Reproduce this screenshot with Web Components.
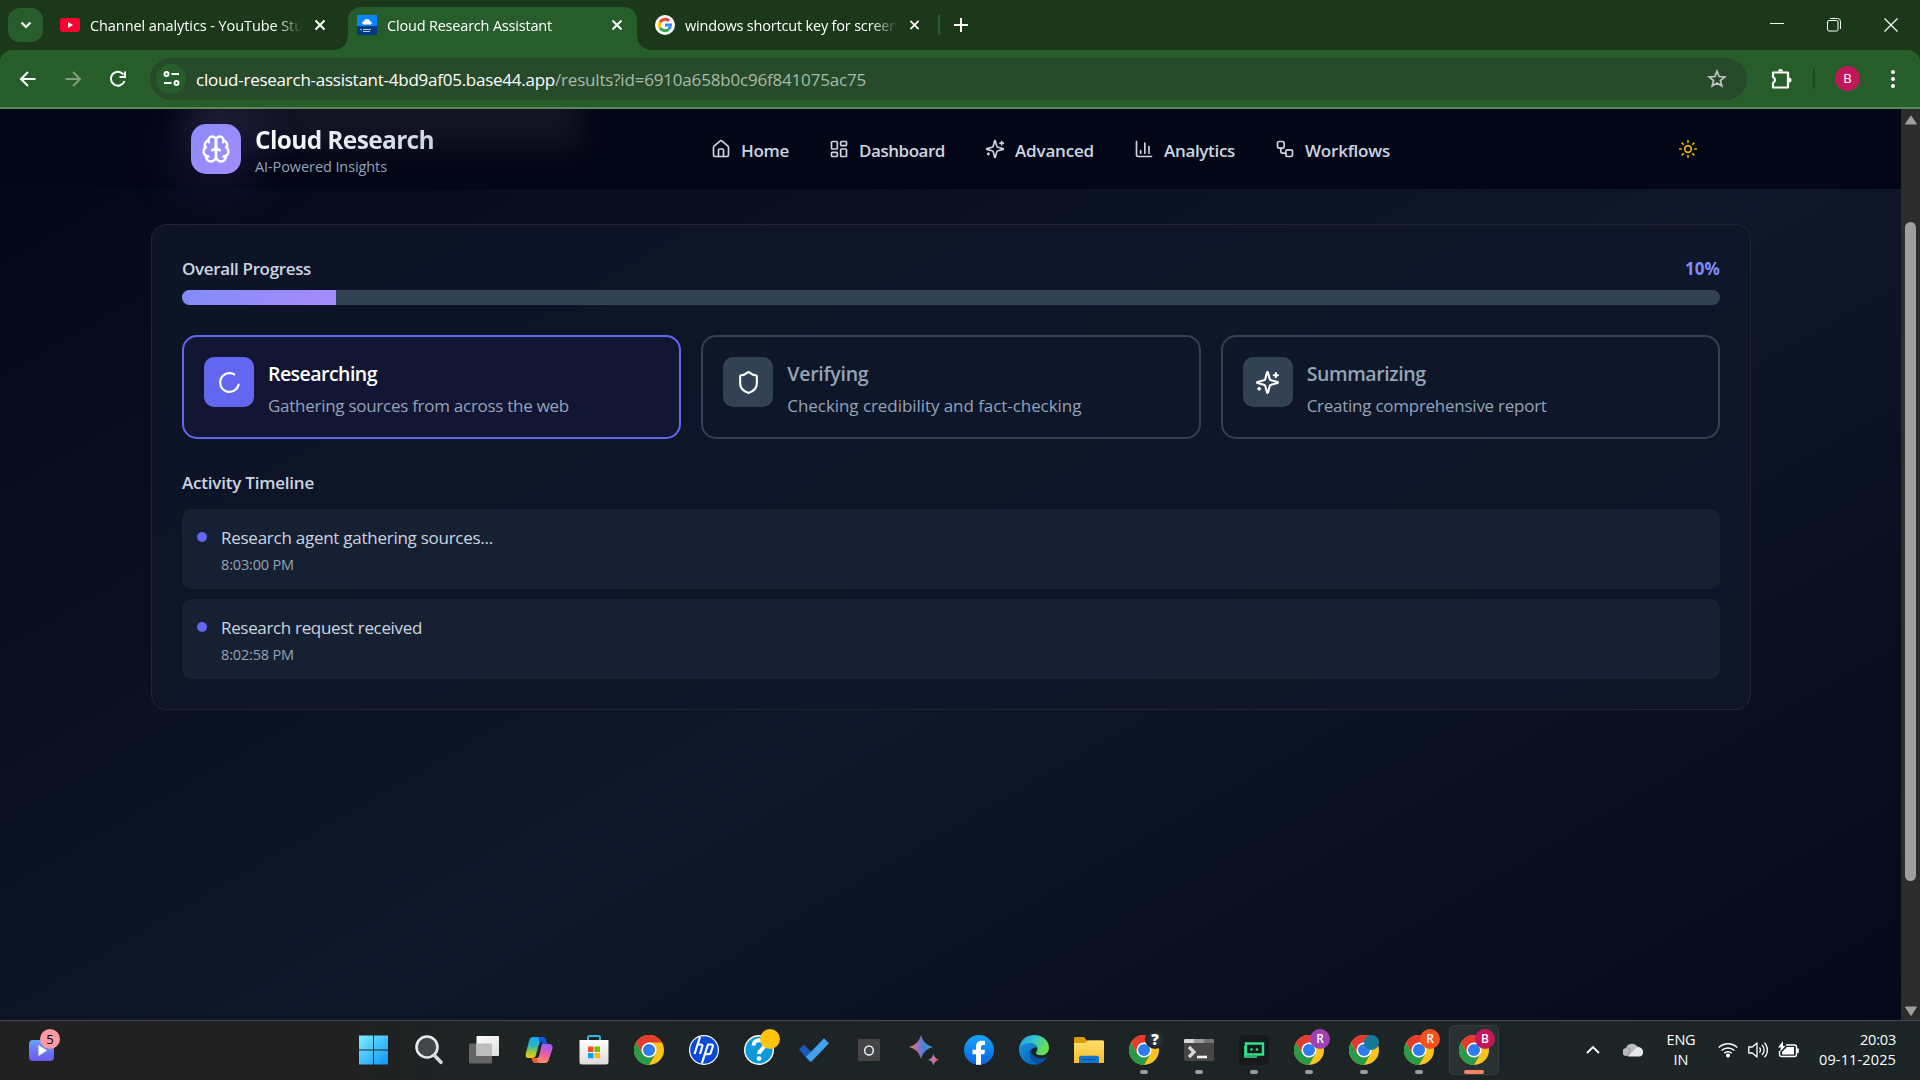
<!DOCTYPE html>
<html lang="en">
<head>
<meta charset="utf-8">
<title>Cloud Research Assistant</title>
<style>
	html, body {
		margin: 0;
		width: 1920px;
		height: 1080px;
		overflow: hidden;
		background: #020617;
		font-family: "Open Sans", "Noto Sans", sans-serif;
	}

	body {
		display: flex;
		flex-direction: column;
	}
</style>
</head>
<body>

<browser-tabs></browser-tabs>
<browser-toolbar></browser-toolbar>
<browser-viewport>
	<site-header slot="header">
		<nav-link icon="home" w="48">Home</nav-link>
		<nav-link icon="dashboard" w="86">Dashboard</nav-link>
		<nav-link icon="sparkles" w="79">Advanced</nav-link>
		<nav-link icon="chart" w="71">Analytics</nav-link>
		<nav-link icon="workflow" w="85">Workflows</nav-link>
	</site-header>
	<progress-card value="10">
		<stage-card slot="stages" icon="loader" active>
			<fit-text slot="title" w="109">Researching</fit-text>
			<fit-text slot="text" w="301">Gathering sources from across the web</fit-text>
		</stage-card>
		<stage-card slot="stages" icon="shield">
			<fit-text slot="title" w="81">Verifying</fit-text>
			<fit-text slot="text" w="294">Checking credibility and fact-checking</fit-text>
		</stage-card>
		<stage-card slot="stages" icon="sparkles">
			<fit-text slot="title" w="119">Summarizing</fit-text>
			<fit-text slot="text" w="240">Creating comprehensive report</fit-text>
		</stage-card>
		<timeline-item slot="activity">
			<fit-text w="272">Research agent gathering sources...</fit-text>
			<fit-text slot="time" w="73">8:03:00 PM</fit-text>
		</timeline-item>
		<timeline-item slot="activity">
			<fit-text w="201">Research request received</fit-text>
			<fit-text slot="time" w="73">8:02:58 PM</fit-text>
		</timeline-item>
	</progress-card>
</browser-viewport>
<task-bar></task-bar>

<script>
const LINE_ICONS = {
	home: '<path d="M15 21v-8a1 1 0 0 0-1-1h-4a1 1 0 0 0-1 1v8"/><path d="M3 10a2 2 0 0 1 .709-1.528l7-5.999a2 2 0 0 1 2.582 0l7 5.999A2 2 0 0 1 21 10v9a2 2 0 0 1-2 2H5a2 2 0 0 1-2-2z"/>',
	dashboard: '<rect x="3" y="3" width="7" height="9" rx="1"/><rect x="14" y="3" width="7" height="5" rx="1"/><rect x="14" y="12" width="7" height="9" rx="1"/><rect x="3" y="16" width="7" height="5" rx="1"/>',
	sparkles: '<path d="M9.937 15.5A2 2 0 0 0 8.5 14.063l-6.135-1.582a.5.5 0 0 1 0-.962L8.5 9.936A2 2 0 0 0 9.937 8.5l1.582-6.135a.5.5 0 0 1 .963 0L14.063 8.5A2 2 0 0 0 15.5 9.937l6.135 1.581a.5.5 0 0 1 0 .964L15.5 14.063a2 2 0 0 0-1.437 1.437l-1.582 6.135a.5.5 0 0 1-.963 0z"/><path d="M20 3v4M22 5h-4M4 17v2M5 18H3"/>',
	chart: '<path d="M3 3v16a2 2 0 0 0 2 2h16M18 17V9M13 17V5M8 17v-3"/>',
	workflow: '<rect x="3" y="3" width="8" height="8" rx="2"/><path d="M7 11v4a2 2 0 0 0 2 2h4"/><rect x="13" y="13" width="8" height="8" rx="2"/>',
	sun: '<circle cx="12" cy="12" r="4"/><path d="M12 2v2M12 20v2M4.93 4.93l1.41 1.41M17.66 17.66l1.41 1.41M2 12h2M20 12h2M6.34 17.66l-1.41 1.41M19.07 4.93l-1.41 1.41"/>',
	brain: '<path d="M12 5a3 3 0 1 0-5.997.125 4 4 0 0 0-2.526 5.77 4 4 0 0 0 .556 6.588A4 4 0 1 0 12 18Z"/><path d="M12 5a3 3 0 1 1 5.997.125 4 4 0 0 1 2.526 5.77 4 4 0 0 1-.556 6.588A4 4 0 1 1 12 18Z"/><path d="M15 13a4.5 4.5 0 0 1-3-4 4.5 4.5 0 0 1-3 4"/><path d="M17.599 6.5a3 3 0 0 0 .399-1.375M6.003 5.125A3 3 0 0 0 6.401 6.5M3.477 10.896a4 4 0 0 1 .585-.396M19.938 10.5a4 4 0 0 1 .585.396M6 18a4 4 0 0 1-1.967-.516M19.967 17.484A4 4 0 0 1 18 18"/>',
	shield: '<path d="M20 13c0 5-3.5 7.5-7.66 8.95a1 1 0 0 1-.67-.01C7.5 20.5 4 18 4 13V6a1 1 0 0 1 1-1c2 0 4.5-1.2 6.24-2.72a1.17 1.17 0 0 1 1.52 0C14.51 3.81 17 5 19 5a1 1 0 0 1 1 1z"/>',
	loader: '<path d="M21 12a9 9 0 1 1-6.219-8.56" transform="rotate(12 12 12)"/>'
};

const CHROME = `
	<circle cx="15" cy="15" r="15" fill="#fcc31e"/>
	<path d="M2 7.500A15 15 0 0 0 15 30l6.500-11.200L8.500 18.700z" fill="#2a9a48"/>
	<path d="M2 7.500A15 15 0 0 1 28 7.500H15L8.500 18.700z" fill="#e33b2e"/>
	<circle cx="15" cy="15" r="7.500" fill="#fff"/>
	<circle cx="15" cy="15" r="6" fill="#2f7bf0"/>`;

// every drawing sits in a 30 x 30 box
const APP_ICONS = {
	start: '<defs><linearGradient id="a" gradientUnits="userSpaceOnUse" x2="30" y2="30"><stop stop-color="#7cf0ff"/><stop offset="1" stop-color="#0d90f5"/></linearGradient></defs><path d="M0 .500h14v14H0zM15 .500h14v14H15zM0 15.500h14v14H0zM15 15.500h14v14H15z" fill="url(#a)"/>',
	search: '<circle cx="13" cy="12" r="10.500" fill="#43474a" stroke="#e9e9eb" stroke-width="2.600"/><path d="M20.500 20.500l6.500 6.800" stroke="#d9dade" stroke-width="3.600" stroke-linecap="round"/>',
	tasks: '<defs><linearGradient id="a" x2="1" y2="1"><stop stop-color="#fff"/><stop offset="1" stop-color="#ddd"/></linearGradient></defs><rect x="0" y="8.500" width="23" height="20" rx="1" fill="#656565"/><rect x="7.500" y="1" width="22.500" height="20" rx="1" fill="url(#a)"/><path d="M7.500 8.500H23V21H7.500z" fill="#bdbdbd"/>',
	copilot: `<defs>
		<linearGradient id="a" x2="0" y2="1"><stop stop-color="#1aa6f0"/><stop offset=".4" stop-color="#23b8c0"/><stop offset=".7" stop-color="#9bc93c"/><stop offset="1" stop-color="#f6c712"/></linearGradient>
		<linearGradient id="b" x1=".6" x2=".3" y2="1"><stop stop-color="#9a5cf5"/><stop offset=".5" stop-color="#e860a8"/><stop offset="1" stop-color="#ff9a4a"/></linearGradient></defs>
		<path d="M9 2h9c2.500 0 3.500 1.500 4 4l.8 3H17c-2 0-2.500 1-3 3l-2 7.500c-.5 2-2 3.500-4 3.500H4.500C2 23 1.300 21 1.800 18.500L5 6c.6-2.500 2-4 4-4z" fill="url(#a)"/>
		<path d="M14 2h4c2.500 0 3.500 1.500 4 4l1 3h-5c-1 0-2 .5-2.500 1.500C15 8 15.500 4 14 2z" fill="#1454d8"/>
		<path d="M21 28H12c-2.500 0-3.500-1.500-4-4l-.4-1H9c2 0 3-1.500 3.500-3.500l2-7.500c.5-2 2-3 4-3H25c2.500 0 4 2 3.500 4.500L25 24c-.6 2.500-2 4-4 4z" fill="url(#b)"/>
		<path d="M12.500 19.500l3.300-11c.5-1.300 1.500-2 2.700-2l-3.300 14c-.4 1.700-1.200 2.500-2.500 2.500h-2c.9-.7 1.400-2 1.800-3.500z" fill="#1e2324"/>
		<path d="M15.500 28H12c-2.500 0-3.500-1.500-4-4l-.4-1h4.900c.8 2 1 4 3 5z" fill="#ef5a35"/>`,
	store: '<defs><linearGradient id="a" x2="0" y2="1"><stop stop-color="#fff"/><stop offset="1" stop-color="#dcdcdc"/></linearGradient></defs><path d="M9 6V2.500c0-1 .5-1.500 1.500-1.500h9c1 0 1.500.5 1.500 1.500V6" fill="none" stroke="#2fb4ea" stroke-width="2"/><path d="M.5 5h29v22a2.500 2.500 0 0 1-2.500 2.500H3A2.500 2.500 0 0 1 .5 27z" fill="url(#a)"/><path d="M9 11.500h5.500V17H9z" fill="#f25022"/><path d="M15.500 11.500H21V17h-5.500z" fill="#7fba00"/><path d="M9 18h5.500v5.200H9z" fill="#00a4ef"/><path d="M15.500 18H21v5.200h-5.500z" fill="#ffb900"/>',
	chrome: CHROME,
	hp: '<circle cx="15" cy="15" r="15" fill="#fff"/><circle cx="15" cy="15" r="13.800" fill="#0748d6"/><path d="M11 2L5.500 19M8.500 9.500h3.200c1.500 0 2 .8 1.600 2L11 19M19 9.500L12.800 28.500M18 9.500h4.200c1.500 0 2 .8 1.600 2l-2 6.200c-.3 1-1 1.500-2 1.500H15.500" fill="none" stroke="#fff" stroke-width="2.200"/>',
	help: '<circle cx="15" cy="15" r="15" fill="#fff"/><circle cx="15" cy="15" r="13.600" fill="#0d9ada"/><path d="M9.500 10.500c0-7 11-7 11-.5 0 4-5.500 4.500-5.500 9" fill="none" stroke="#fff" stroke-width="4"/><circle cx="15" cy="23.500" r="2.300" fill="#fff"/>',
	todo: '<path d="M0 14.500L4.800 9.500l10 10L11 27z" fill="#185abd"/><path d="M7 22L25 3.200l5 5.100L12 27z" fill="#41a2ee"/>',
	letter: '<rect x="4" y="4" width="22" height="22" rx="1" fill="#454545"/><ellipse cx="15" cy="15.500" rx="4.300" ry="4.600" fill="none" stroke="#e8f2fb" stroke-width="1.500"/>',
	spark: '<defs><linearGradient id="a" x2="1"><stop stop-color="#f08a4a"/><stop offset=".35" stop-color="#a070b8"/><stop offset=".65" stop-color="#3d86d8"/><stop offset="1" stop-color="#35b0d0"/></linearGradient><linearGradient id="b" x2="1"><stop stop-color="#9a78e0"/><stop offset="1" stop-color="#f06a6a"/></linearGradient></defs><path d="M12 0c2.200 7 5 9.800 12 12-7 2.200-9.800 5-12 12C9.800 17 7 14.200 0 12 7 9.800 9.800 7 12 0z" fill="url(#a)"/><path d="M24.500 19c.9 3.200 2.300 4.800 5.500 5.700-3.200.9-4.600 2.500-5.500 5.700-.9-3.200-2.300-4.800-5.500-5.700 3.200-.9 4.600-2.500 5.500-5.700z" fill="url(#b)"/>',
	facebook: '<defs><linearGradient id="a" x2="0" y2="1"><stop stop-color="#18a5f8"/><stop offset="1" stop-color="#0a63e0"/></linearGradient></defs><circle cx="15" cy="15" r="15" fill="url(#a)"/><path d="M12 29.700V19.300H8.500v-4.500H12v-3c0-4 2.300-6 5.800-6 1.200 0 2.700.2 3.200.3v3.900h-2c-1.600 0-2 .9-2 2v2.800h4l-.7 4.500H17v10.400z" fill="#fff"/>',
	edge: `<defs><linearGradient id="a" x2="1" y2=".4"><stop stop-color="#1c9be0"/><stop offset=".5" stop-color="#30c4d0"/><stop offset="1" stop-color="#6be04e"/></linearGradient>
		<linearGradient id="b" x2=".6" y2="1"><stop stop-color="#1695dc"/><stop offset="1" stop-color="#0866c0"/></linearGradient></defs>
		<path d="M0 14C1 5 7 0 15 0c9 0 15 6 15 12.500 0 5-3.500 7.800-8 7.800-3.500 0-5-1.200-5-2.300s1.500-1.500 1.500-4c0-3-3-5.500-7-5.500C6.500 8.500 2 11 0 14z" fill="url(#a)"/>
		<path d="M0 14c2-4 6-6 10.500-6 4 0 7.500 2 8 5-4-1.500-7.500 1.500-7.500 6 0 6 6 9.500 9 10C10 32-.5 25 0 14z" fill="url(#b)"/>
		<path d="M12.500 13.500C8 17 11 27 20 29c3-1 6-3.500 7.500-6 .3-.6-.2-.8-.8-.5-6 2.500-16-1-14.200-9z" fill="#0c4f9e"/>`,
	folder: '<defs><linearGradient id="a" x2="0" y2="1"><stop stop-color="#ffdf70"/><stop offset="1" stop-color="#fbbd28"/></linearGradient></defs><path d="M0 3.500C0 2.500.5 2 1.500 2H10l3 3.500h15c1.200 0 2 .5 2 1.500V12H0z" fill="#dd9a08"/><path d="M0 8h11l3-2.500h14.500c1 0 1.500.5 1.500 1.500v21H0z" fill="url(#a)"/><path d="M5 28v-5c0-1.500.8-2.300 2.300-2.300h15.400c1.500 0 2.300.8 2.300 2.300v5z" fill="#0f78cc"/><path d="M8.500 24.500h13" stroke="#0b4f94" stroke-width="1.200"/>',
	terminal: '<rect y="4" width="30" height="22" rx="1.500" fill="#464646"/><path d="M0 8V5.500C0 4.500.5 4 1.500 4H10v4z" fill="#d8d8d8"/><path d="M10 4h10v4H10z" fill="#9c9c9c"/><path d="M20 4h8.500c1 0 1.500.5 1.500 1.500V8H20z" fill="#747474"/><path d="M5 12l5 5-5 5" fill="none" stroke="#d8d8d8" stroke-width="3.200"/><path d="M13 22h10" stroke="#f5f5f5" stroke-width="2.600"/>',
	agent: '<rect width="30" height="30" rx="5" fill="#17191b"/><path d="M7 8.500h17v11H10.500L7 19.500z" fill="none" stroke="#2fe58b" stroke-width="2.400"/><path d="M6 11v11h12" fill="none" stroke="#2fe58b" stroke-width="1.600"/><circle cx="12.500" cy="14.500" r="1.300" fill="#2fe58b"/><circle cx="18" cy="14.500" r="1.300" fill="#2fe58b"/>'
};

function attach(host, html) {
	const template = document.createElement('template');
	template.innerHTML = html;
	host.attachShadow({ mode: 'open' }).appendChild(template.content.cloneNode(true));
}

class BrowserTabs extends HTMLElement {
	constructor() {
		super();
		attach(this, `
		<style>
			:host {
				display: flex;
				align-items: center;
				height: 50px;
				background: #1b381b;
				color: #fff;
			}

			svg { display: block; flex: none; }

			.search {
				display: flex;
				align-items: center;
				justify-content: center;
				width: 35px;
				height: 34px;
				border-radius: 12px;
				background: #275d2b;
				margin-left: 8px;
			}

			.controls {
				display: flex;
				align-items: center;
				gap: 43px;
				margin-left: auto;
				margin-right: 22px;
			}

			.rule {
				width: 2px;
				height: 20px;
				background: #275d2b;
				margin: 0 14px 0 18px;
			}
		</style>
		<div class="search"><svg width="12" height="8" viewBox="0 0 12 8" fill="none" stroke="#fff" stroke-width="2.200"><path d="M1.500 1.500L6 6l4.500-4.500"/></svg></div>
		<browser-tab style="width:305px">
			<svg slot="icon" width="20" height="20" viewBox="0 0 20 20"><rect y="3" width="20" height="14" rx="3" fill="#ff0033"/><path d="M8 7v6l5-3z" fill="#fff"/></svg>
			<fit-text w="213">Channel analytics - YouTube Stu</fit-text>
		</browser-tab>
		<browser-tab active style="width:289px">
			<svg slot="icon" width="20" height="20" viewBox="0 0 20 20"><path d="M0 0h20v11H0z" fill="#0a84ff"/><path d="M0 11h20v9H0z" fill="#003a80"/><path d="M6.500 9.500a1.500 1.500 0 0 1 .3-3 3.300 3.300 0 0 1 6.400 0 1.500 1.500 0 0 1 .3 3z" fill="#fff"/><path d="M3 14l2 1.500M6 14.500h8M6 16.500h7" stroke="#b8cbe6" stroke-width="1"/></svg>
			<fit-text w="165">Cloud Research Assistant</fit-text>
		</browser-tab>
		<browser-tab style="width:283px;padding-left:18px">
			<svg slot="icon" width="20" height="20" viewBox="0 0 20 20" fill="none" stroke-width="3"><circle cx="10" cy="10" r="10" fill="#fff"/><path d="M14 5.800A5.600 5.600 0 0 0 5.200 7.200" stroke="#ea4335"/><path d="M5.200 7.200a5.600 5.600 0 0 0 0 5.700" stroke="#fbbc05"/><path d="M5.200 12.900a5.600 5.600 0 0 0 8.400 1.400" stroke="#34a853"/><path d="M13.600 14.300a5.600 5.600 0 0 0 2-4.300H10" stroke="#4285f4" stroke-width="2.800"/></svg>
			<fit-text w="213">windows shortcut key for screen</fit-text>
		</browser-tab>
		<div class="rule"></div>
		<svg width="14" height="14" viewBox="0 0 14 14" stroke="#fff" stroke-width="2"><path d="M7 0v14M0 7h14"/></svg>
		<div class="controls">
			<svg width="14" height="14" viewBox="0 0 14 14" stroke="#fff"><path d="M0 5.500h14"/></svg>
			<svg width="14" height="14" viewBox="0 0 14 14" fill="none" stroke="#fff"><rect x=".5" y="2.500" width="10.500" height="10.500" rx="1.500"/><path d="M3 .5h7.500a3 3 0 0 1 3 3V11"/></svg>
			<svg width="14" height="14" viewBox="0 0 14 14" stroke="#fff" stroke-width="1.200"><path d="M.5.500l13 13M13.500.500l-13 13"/></svg>
		</div>`);
	}
}

class BrowserTab extends HTMLElement {
	constructor() {
		super();
		attach(this, `
		<style>
			:host {
				display: flex;
				align-items: center;
				align-self: stretch;
				box-sizing: border-box;
				padding-left: 17px;
				font-size: 14.500px;
			}

			:host([active]) {
				position: relative;
				margin-top: 7px;
				padding-left: 9px;
				padding-bottom: 7px;
				border-radius: 13px 13px 0 0;
				background: #275d2b;
			}

			/* flared feet of the active tab */
			:host([active])::before,
			:host([active])::after {
				content: "";
				position: absolute;
				bottom: 0;
				width: 14px;
				height: 14px;
			}

			:host([active])::before {
				left: -14px;
				background: radial-gradient(circle at 0 0, transparent 13.500px, #275d2b 14px);
			}

			:host([active])::after {
				right: -14px;
				background: radial-gradient(circle at 100% 0, transparent 13.500px, #275d2b 14px);
			}

			.label {
				flex: none;
				width: 211px;
				margin: 0 13px 0 10px;
				overflow: hidden;
				-webkit-mask-image: linear-gradient(90deg, #000 186px, transparent 213px);
				mask-image: linear-gradient(90deg, #000 186px, transparent 213px);
			}
		</style>
		<slot name="icon"></slot>
		<div class="label"><slot></slot></div>
		<svg width="12" height="12" viewBox="0 0 12 12" stroke="#fff" stroke-width="1.900"><path d="M1.500 1.500l9 9M10.500 1.500l-9 9"/></svg>`);
	}
}

class BrowserToolbar extends HTMLElement {
	constructor() {
		super();
		attach(this, `
		<style>
			:host {
				display: block;
				height: 59px;
				background: #1b381b;
			}

			.bar {
				display: flex;
				align-items: center;
				height: 57px;
				border-bottom: 2px solid #538a57;
				border-radius: 12px 12px 0 0;
				background: #275d2b;
			}

			svg { display: block; flex: none; }

			.nav {
				display: flex;
				gap: 25px;
				padding: 0 22px 0 18px;
			}

			.omnibox {
				display: flex;
				align-items: center;
				width: 1597px;
				height: 42px;
				box-sizing: border-box;
				padding: 0 20px 0 6px;
				border-radius: 21px;
				background: #274a2b;
				font-size: 17px;
				color: #fff;
			}

			.info {
				display: flex;
				align-items: center;
				justify-content: center;
				width: 30px;
				height: 30px;
				border-radius: 50%;
				background: #275d2b;
				margin-right: 10px;
			}

			.omnibox fit-text { padding-top: 1px; }

			.path { color: #a9bba9; }

			.star { margin-left: auto; }

			.tools {
				display: flex;
				align-items: center;
				padding-left: 24px;
			}

			.rule {
				width: 2px;
				height: 20px;
				background: #1b4a1f;
				margin: 0 20px;
			}

			.avatar {
				width: 25px;
				height: 25px;
				line-height: 25px;
				border-radius: 50%;
				background: #c2185b;
				color: #fff;
				text-align: center;
				font-size: 13px;
				margin-right: 31px;
			}
		</style>
		<div class="bar">
			<div class="nav">
				<svg width="20" height="20" viewBox="0 0 20 20" fill="none" stroke="#fff" stroke-width="2"><path d="M17.500 10H3.500M10 3L3 10l7 7"/></svg>
				<svg width="20" height="20" viewBox="0 0 20 20" fill="none" stroke="#7d9e7f" stroke-width="2"><path d="M2.500 10h14M10 3l7 7-7 7"/></svg>
				<svg width="20" height="20" viewBox="0 0 20 20" fill="none" stroke="#fff" stroke-width="2"><path d="M15.500 5.500A7 7 0 1 0 16.500 12M17 2.500V8h-5.500"/></svg>
			</div>
			<div class="omnibox">
				<div class="info">
					<svg width="17" height="15" viewBox="0 0 17 15" fill="none" stroke="#fff" stroke-width="2"><circle cx="3.500" cy="3" r="2"/><path d="M8.500 3H16M1 12h7.500"/><circle cx="13.500" cy="12" r="2"/></svg>
				</div>
				<fit-text w="359">cloud-research-assistant-4bd9af05.base44.app</fit-text>
				<fit-text w="311" class="path">/results?id=6910a658b0c96f841075ac75</fit-text>
				<svg class="star" width="20" height="20" viewBox="0 0 20 20" fill="none" stroke="#c3c3c6" stroke-width="1.700"><path d="M10 2.200l2.100 5.300 5.700.4-4.400 3.600 1.400 5.500L10 14l-4.800 3 1.400-5.500-4.400-3.600 5.700-.4z"/></svg>
			</div>
			<div class="tools">
				<svg width="22" height="22" viewBox="0 0 22 22"><path d="M2 4.500h15v15H2v-4.500a3.300 3.300 0 0 0 0-6z" fill="none" stroke="#fff" stroke-width="2.200" stroke-linejoin="round"/><path d="M7 3.500a2.500 2.500 0 0 1 5 0zM18 9.500a2.500 2.500 0 0 1 0 5z" fill="#fff"/></svg>
				<div class="rule"></div>
				<div class="avatar">B</div>
				<svg width="4" height="18" viewBox="0 0 4 18" fill="#fff"><circle cx="2" cy="2" r="2"/><circle cx="2" cy="9" r="2"/><circle cx="2" cy="16" r="2"/></svg>
			</div>
		</div>`);
	}
}

class BrowserViewport extends HTMLElement {
	constructor() {
		super();
		attach(this, `
		<style>
			:host {
				display: flex;
				height: 911px;
			}

			/* the gradient belongs to the whole document, which is taller than the window */
			.page {
				display: flex;
				flex-direction: column;
				width: 1901px;
				overflow: hidden;
				background: linear-gradient(to bottom right, #020617, #0f172a 50%, #020617) 0 -9px / 100% 1095px no-repeat;
			}

			main {
				padding: 35px 150px 0 151px;
			}

			.scroll {
				display: flex;
				flex-direction: column;
				align-items: center;
				width: 19px;
				background: #2c2c2c;
				padding: 6px 0 3px;
				box-sizing: border-box;
			}

			.thumb {
				width: 11px;
				height: 659px;
				border-radius: 6px;
				background: #9f9f9f;
				margin: 97px 0 auto;
			}
		</style>
		<div class="page">
			<slot name="header"></slot>
			<main><slot></slot></main>
		</div>
		<div class="scroll">
			<svg width="14" height="10" viewBox="0 0 14 10"><path d="M7 1l5.500 8h-11z" fill="#9f9f9f" stroke="#9f9f9f" stroke-linejoin="round"/></svg>
			<div class="thumb"></div>
			<svg width="14" height="11" viewBox="0 0 14 11"><path d="M7 9.500L1.500 1h11z" fill="#9f9f9f" stroke="#9f9f9f" stroke-linejoin="round"/></svg>
		</div>`);
	}
}

class SiteHeader extends HTMLElement {
	constructor() {
		super();
		attach(this, `
		<style>
			:host {
				position: relative;
				display: flex;
				align-items: center;
				height: 80px;
				background: #030616;
			}

			.glow {
				position: absolute;
				left: 190px;
				top: -40px;
				width: 390px;
				height: 78px;
				background: rgba(60, 55, 75, .28);
				filter: blur(14px);
			}

			.logo {
				position: relative;
				display: flex;
				flex: none;
				align-items: center;
				justify-content: center;
				width: 50px;
				height: 50px;
				margin-left: 191px;
				border-radius: 15px;
				background: linear-gradient(135deg, #8b8cfa, #a48bfa);
				box-shadow: 0 0 60px 8px rgba(129, 110, 230, .22);
				color: #fff;
			}

			.brand {
				position: relative;
				display: flex;
				flex: none;
				flex-direction: column;
				width: 456px;
				padding: 4px 0 0 14px;
				box-sizing: border-box;
			}

			.name {
				font-size: 24.500px;
				font-weight: 700;
				line-height: 31px;
				background: linear-gradient(90deg, #fff, #cbd5e1);
				-webkit-background-clip: text;
				background-clip: text;
				color: transparent;
			}

			.tag {
				font-size: 14.500px;
				line-height: 23px;
				color: #94a3b8;
			}

			nav {
				display: flex;
				align-items: center;
				gap: 40px;
				margin-left: 14px;
			}

			.theme {
				margin-left: auto;
				margin-right: 203px;
				color: #eab308;
			}
		</style>
		<div class="glow"></div>
		<div class="logo"><line-icon name="brain" size="30"></line-icon></div>
		<div class="brand">
			<fit-text class="name" w="179">Cloud Research</fit-text>
			<fit-text class="tag" w="132">AI-Powered Insights</fit-text>
		</div>
		<nav><slot></slot></nav>
		<line-icon class="theme" name="sun" size="20"></line-icon>`);
	}
}

class NavLink extends HTMLElement {
	constructor() {
		super();
		attach(this, `
		<style>
			:host {
				display: flex;
				align-items: center;
				gap: 10px;
				font-size: 17px;
				font-weight: 600;
				color: #cbd5e1;
			}

			fit-text { padding-top: 2px; }
		</style>
		<line-icon name="${this.getAttribute('icon')}" size="20"></line-icon>
		<fit-text w="${this.getAttribute('w')}">${this.textContent}</fit-text>`);
	}
}

class ProgressCard extends HTMLElement {
	constructor() {
		super();
		const value = this.getAttribute('value');
		attach(this, `
		<style>
			:host {
				display: block;
				box-sizing: border-box;
				height: 486px;
				padding: 30px 30px 28px;
				border: 1px solid #202430;
				border-radius: 15px;
				background: rgba(15, 22, 41, .8);
				font-size: 17px;
			}

			.row {
				display: flex;
				justify-content: space-between;
				line-height: 28px;
				font-weight: 600;
				color: #cbd5e1;
			}

			.percent {
				font-weight: 700;
				color: #818cf8;
			}

			.track {
				height: 15px;
				margin: 7px 0 30px;
				border-radius: 8px;
				background: #334155;
				overflow: hidden;
			}

			.fill {
				width: ${value}%;
				height: 100%;
				background: linear-gradient(135deg, #818cf8, #a78bfa);
			}

			.stages {
				display: grid;
				grid-template-columns: repeat(3, 1fr);
				gap: 20px;
				margin-bottom: 30px;
			}

			.list {
				display: grid;
				gap: 10px;
				margin-top: 12px;
			}
		</style>
		<div class="row">
			<fit-text w="129">Overall Progress</fit-text>
			<fit-text class="percent" w="35">${value}%</fit-text>
		</div>
		<div class="track"><div class="fill"></div></div>
		<div class="stages"><slot name="stages"></slot></div>
		<div class="row"><fit-text w="132">Activity Timeline</fit-text></div>
		<div class="list"><slot name="activity"></slot></div>`);
	}
}

class StageCard extends HTMLElement {
	constructor() {
		super();
		attach(this, `
		<style>
			:host {
				display: flex;
				gap: 14px;
				height: 104px;
				box-sizing: border-box;
				padding: 20px;
				border: 2px solid #334155;
				border-radius: 15px;
				background: rgba(15, 23, 42, .6);
				color: #94a3b8;
			}

			:host([active]) {
				border-color: #6366f1;
				background: #121633;
			}

			.tile {
				display: flex;
				align-items: center;
				justify-content: center;
				width: 50px;
				height: 50px;
				border-radius: 10px;
				background: #334155;
				color: #fff;
			}

			:host([active]) .tile { background: #6366f1; }

			.title {
				font-size: 19.500px;
				font-weight: 600;
				line-height: 33px;
			}

			:host([active]) .title { color: #fff; }

			.text {
				font-size: 17px;
				line-height: 32px;
			}
		</style>
		<div class="tile"><line-icon name="${this.getAttribute('icon')}" size="25"></line-icon></div>
		<div>
			<div class="title"><slot name="title"></slot></div>
			<div class="text"><slot name="text"></slot></div>
		</div>`);
	}
}

class TimelineItem extends HTMLElement {
	constructor() {
		super();
		attach(this, `
		<style>
			:host {
				display: flex;
				gap: 14px;
				height: 80px;
				box-sizing: border-box;
				padding: 14px 15px;
				border-radius: 10px;
				background: #172032;
				font-size: 17px;
				line-height: 29px;
				color: #cbd5e1;
			}

			.dot {
				width: 10px;
				height: 10px;
				border-radius: 50%;
				background: #6366f1;
				margin-top: 9px;
			}

			.time {
				font-size: 14.500px;
				line-height: 25px;
				color: #94a3b8;
			}
		</style>
		<div class="dot"></div>
		<div>
			<div><slot></slot></div>
			<div class="time"><slot name="time"></slot></div>
		</div>`);
	}
}

class TaskBar extends HTMLElement {
	constructor() {
		super();
		attach(this, `
		<style>
			:host {
				display: flex;
				height: 60px;
				box-sizing: border-box;
				border-top: 1px solid #45484a;
				background: linear-gradient(90deg, #212121 340px, #1e2324 480px, #1d2425 1300px, #1c2527);
				color: #fff;
				font-size: 14.500px;
			}

			svg { display: block; flex: none; }

			.widgets {
				position: relative;
				width: 317px;
				padding: 15px 0 0 29px;
			}

			.count {
				position: absolute;
				left: 40px;
				top: 8px;
				width: 20px;
				height: 20px;
				line-height: 20px;
				border-radius: 50%;
				background: #ff99a4;
				color: #000;
				text-align: center;
				font-size: 13px;
			}

			.apps { display: flex; }

			.tray {
				display: flex;
				align-items: center;
				margin-left: auto;
				padding: 0 24px 2px 0;
				line-height: 20px;
			}

			.lang {
				width: 30px;
				margin: 0 32px;
				margin-right: 22px;
			}

			.lang fit-text,
			.clock fit-text { margin-left: auto; }

			.lang fit-text { margin-right: auto; }

			.clock { margin-left: 20px; }
		</style>
		<div class="widgets">
			<svg width="25" height="28" viewBox="0 0 25 28"><defs><linearGradient id="w" x2="0" y2="1"><stop stop-color="#6aa0f8"/><stop offset="1" stop-color="#6a58ee"/></linearGradient></defs><rect y="4" width="25" height="21" rx="4" fill="url(#w)"/><path d="M9.500 9v11l8.500-5.500z" fill="#fff"/></svg>
			<div class="count">5</div>
		</div>
		<div class="apps">
			<task-app icon="start"></task-app>
			<task-app icon="search"></task-app>
			<task-app icon="tasks"></task-app>
			<task-app icon="copilot"></task-app>
			<task-app icon="store"></task-app>
			<task-app icon="chrome"></task-app>
			<task-app icon="hp"></task-app>
			<task-app icon="help" badge="#ffc20e"></task-app>
			<task-app icon="todo"></task-app>
			<task-app icon="letter"></task-app>
			<task-app icon="spark"></task-app>
			<task-app icon="facebook"></task-app>
			<task-app icon="edge"></task-app>
			<task-app icon="folder"></task-app>
			<task-app icon="chrome" badge="radial-gradient(#38434a, #10161a)" running><b style="font-size:15px">?</b></task-app>
			<task-app icon="terminal" running></task-app>
			<task-app icon="agent" running></task-app>
			<task-app icon="chrome" badge="#a040b5" running>R</task-app>
			<task-app icon="chrome" badge="#137a99" running small></task-app>
			<task-app icon="chrome" badge="#f4511e" running>R</task-app>
			<task-app icon="chrome" badge="#c2185b" running active>B</task-app>
		</div>
		<div class="tray">
			<svg width="14" height="9" viewBox="0 0 14 9" fill="none" stroke="#fff" stroke-width="1.800"><path d="M1 8l6-6 6 6"/></svg>
			<svg style="margin-left:23px" width="20" height="14" viewBox="0 0 20 14"><path d="M4 13a4 4 0 0 1-1-8A6.500 6.500 0 0 1 14.500 3.500 5 5 0 0 1 16 13z" fill="#b9bbbd"/><path d="M5 13.500L13 5a4.600 4.600 0 0 1 7 4.500c0 2.500-1.500 4-4 4z" fill="#e6e7e8"/><path d="M3 5C8 4 8 8 4 13" fill="none" stroke="#8e9193"/></svg>
			<div class="lang" style="margin-left:23px"><fit-text w="29">ENG</fit-text><fit-text w="15">IN</fit-text></div>
			<svg width="20" height="16" viewBox="0 0 20 16" fill="none" stroke="#fff" stroke-width="1.400"><path d="M.7 5.500a13.500 13.500 0 0 1 18.600 0M3.500 8.500a9.500 9.500 0 0 1 13 0M6.200 11.300a5.500 5.500 0 0 1 7.600 0"/><circle cx="10" cy="13.600" r="1.300" fill="#fff"/></svg>
			<svg style="margin-left:10px" width="20" height="18" viewBox="0 0 20 18" fill="none" stroke="#fff" stroke-width="1.300"><path d="M.8 6h3.500L9 2v14l-4.700-4H.8z" stroke-linejoin="round"/><path d="M11.500 6.500a4 4 0 0 1 0 5M14 4a7 7 0 0 1 0 10M16.500 1.700a10.500 10.500 0 0 1 0 14.600"/></svg>
			<svg style="margin-left:10px" width="21" height="18" viewBox="0 0 21 18"><path d="M8 4h8.500a2 2 0 0 1 2 2v7.500a2 2 0 0 1-2 2H3.500a2 2 0 0 1-2-2V10" fill="none" stroke="#fff" stroke-width="1.400"/><path d="M9 6h7v7.500H4V11z" fill="#fff"/><path d="M19 7.500h1.800v4.500H19z" fill="#fff"/><path d="M5 0L0 6.500h3L2 11l5.500-6H5z" fill="#fff"/></svg>
			<div class="clock"><fit-text w="36">20:03</fit-text><fit-text w="77">09-11-2025</fit-text></div>
		</div>`);
	}
}

class TaskApp extends HTMLElement {
	constructor() {
		super();
		const badge = this.getAttribute('badge');
		attach(this, `
		<style>
			:host {
				position: relative;
				display: flex;
				align-items: center;
				justify-content: center;
				width: 55px;
				height: 58px;
			}

			.tile {
				display: flex;
				align-items: center;
				justify-content: center;
				width: 50px;
				height: 50px;
				box-sizing: border-box;
				border-radius: 5px;
			}

			:host([active]) .tile {
				background: #2a3133;
				border: 1px solid #363d3f;
			}

			.badge {
				position: absolute;
				left: 29px;
				top: 8px;
				width: 20px;
				height: 20px;
				line-height: 20px;
				border-radius: 50%;
				background: ${badge || 'none'};
				color: #fff;
				font-size: 12px;
				font-weight: 600;
				text-align: center;
			}

			:host([small]) .badge {
				left: 28px;
				top: 14px;
				width: 15px;
				height: 15px;
			}

			.pill {
				position: absolute;
				left: 24px;
				top: 49px;
				width: 8px;
				height: 4px;
				border-radius: 2px;
				background: #9a9c9d;
				display: none;
			}

			:host([running]) .pill { display: block; }

			:host([active]) .pill {
				left: 18px;
				width: 20px;
				background: #f88464;
			}
		</style>
		<div class="tile"><svg width="30" height="30" viewBox="0 0 30 30" fill="none">${APP_ICONS[this.getAttribute('icon')]}</svg></div>
		${badge ? '<div class="badge"><slot></slot></div>' : ''}
		<div class="pill"></div>`);
	}
}

class LineIcon extends HTMLElement {
	constructor() {
		super();
		const size = this.getAttribute('size');
		attach(this, `
		<style>
			:host { display: block; flex: none; }
			svg { display: block; }
		</style>
		<svg width="${size}" height="${size}" viewBox="0 0 24 24" fill="none" stroke="currentColor" stroke-width="2" stroke-linecap="round" stroke-linejoin="round">${LINE_ICONS[this.getAttribute('name')]}</svg>`);
	}
}

// Single line of text, tracked so that it fills the width given in "w".
class FitText extends HTMLElement {
	constructor() {
		super();
		attach(this, `<style>:host { display: block; width: max-content; white-space: nowrap; } span { display: block; width: max-content; }</style><span><slot></slot></span>`);
	}

	connectedCallback() {
		const span = this.shadowRoot.querySelector('span');
		const extra = this.getAttribute('w') - span.getBoundingClientRect().width;
		span.style.letterSpacing = extra / this.textContent.length + 'px';
	}
}

customElements.define('browser-tabs', BrowserTabs);
customElements.define('browser-tab', BrowserTab);
customElements.define('browser-toolbar', BrowserToolbar);
customElements.define('browser-viewport', BrowserViewport);
customElements.define('site-header', SiteHeader);
customElements.define('nav-link', NavLink);
customElements.define('progress-card', ProgressCard);
customElements.define('stage-card', StageCard);
customElements.define('timeline-item', TimelineItem);
customElements.define('task-bar', TaskBar);
customElements.define('task-app', TaskApp);
customElements.define('line-icon', LineIcon);
// last, so that fonts and sizes of all its hosts are in place when it measures
customElements.define('fit-text', FitText);
</script>
</body>
</html>
